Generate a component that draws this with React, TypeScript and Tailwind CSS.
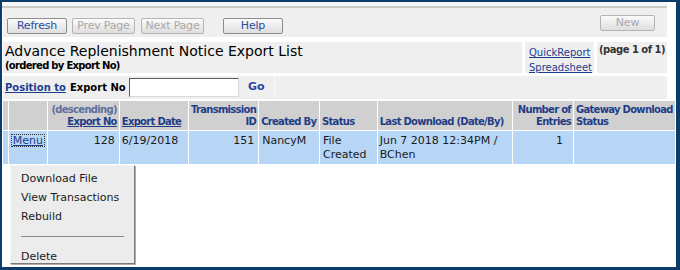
import { useState } from "react";

const font = "font-['DejaVu_Sans',Verdana,sans-serif]";

const columns = [
  { key: "pad", w: "w-[5px]", top: "", bottom: "", right: false, link: false },
  { key: "menu", w: "w-[33px]", top: "", bottom: "", right: false, link: false },
  { key: "exportNo", w: "w-[71px]", top: "(descending)", bottom: "Export No", right: true, link: true },
  { key: "exportDate", w: "w-[69px]", top: "", bottom: "Export Date", right: false, link: true },
  { key: "transId", w: "w-[69px]", top: "Transmission", bottom: "ID", right: true, link: false },
  { key: "createdBy", w: "w-[60px]", top: "", bottom: "Created By", right: false, link: false },
  { key: "status", w: "w-[58px]", top: "", bottom: "Status", right: false, link: false },
  { key: "lastDl", w: "w-[136px]", top: "", bottom: "Last Download (Date/By)", right: false, link: false },
  { key: "entries", w: "w-[60px]", top: "Number of", bottom: "Entries", right: true, link: false },
  { key: "gateway", w: "w-[101px]", top: "Gateway Download", bottom: "Status", right: false, link: false },
];

function ToolButton(props: { label: string; disabled?: boolean; className?: string }) {
  return (
    <button
      type="button"
      className={`h-[16px] rounded-[2px] border bg-gradient-to-b from-[#fbfbfb] to-[#dedede] text-[11px] leading-[14px] tracking-[-0.2px] ${
        props.disabled ? "border-[#b4b4b4] text-[#a8a8a8]" : "border-[#8c8c8c] text-[#2b4a9e]"
      } ${props.className ?? ""}`}
    >
      {props.label}
    </button>
  );
}

export default function App() {
  const [menuOpen] = useState(true);

  return (
    <div className={`${font} w-[680px] h-[270px] bg-[#0c3c6a] pl-[2px] pt-[2px] pr-[4px] pb-[3px]`}>
      <div className="relative h-full w-full bg-white overflow-hidden">
        <div className="h-[4px] w-[665px] bg-[#f6f6f6]" />
        <div className="h-[2px] w-[665px] bg-[#c8c8c8]" />

        {/* toolbar */}
        <div className="ml-[1px] flex h-[29px] w-[664px] items-start bg-[#efefef]">
          <div className="mt-[10px] ml-[4px] flex">
            <ToolButton label="Refresh" className="w-[60px]" />
            <ToolButton label="Prev Page" disabled className="ml-[5px] w-[63px]" />
            <ToolButton label="Next Page" disabled className="ml-[6px] w-[63px]" />
            <ToolButton label="Help" className="ml-[19px] w-[60px]" />
          </div>
          <ToolButton label="New" disabled className="mt-[7px] ml-auto mr-[12px] w-[55px]" />
        </div>

        {/* title row */}
        <div className="mt-[5px] ml-[1px] flex h-[31px] w-[664px] gap-[3px]">
          <div className="flex-1 bg-[#efefef] pl-[2px] pt-[1px]">
            <h1 className="text-[14px] leading-[17px] text-black">Advance Replenishment Notice Export List</h1>
            <p className="text-[10px] leading-[12px] font-bold tracking-[-0.7px] text-black">(ordered by Export No)</p>
          </div>
          <div className="w-[69px] bg-[#efefef] pl-[4px] pt-[3px] text-[10px] leading-[15px] text-[#1b3d8f]">
            <a className="block underline">QuickReport</a>
            <a className="block underline">Spreadsheet</a>
          </div>
          <div className="w-[70px] bg-[#efefef] pl-[2px] pt-[2px] text-[10px] leading-[12px] font-bold tracking-[-0.5px] text-[#333]">
            (page 1 of 1)
          </div>
        </div>

        {/* position row */}
        <div className="mt-[3px] ml-[1px] flex h-[23px] w-[664px] items-center bg-[#efefef] text-[10px] font-bold">
          <a className="ml-[2px] text-[#1b3d8f] underline">Position to</a>
          <span className="ml-[4px] text-black">Export No</span>
          <input
            type="text"
            className="ml-[3px] h-[19px] w-[110px] border border-t-[#5a5a5a] border-l-[#5a5a5a] border-r-[#d8d8d8] border-b-[#d8d8d8] bg-white"
          />
          <div className="flex h-full w-[36px] items-center justify-center border-r border-[#fafafa]">
            <span className="text-[11px] text-[#2b46a0]">Go</span>
          </div>
        </div>

        {/* table */}
        <table className="mt-[1px] table-fixed border-separate border-spacing-[1px] bg-white">
          <colgroup>
            {columns.map((c) => (
              <col key={c.key} className={c.w} />
            ))}
          </colgroup>
          <thead>
            <tr>
              {columns.map((c) => (
                <th
                  key={c.key}
                  className={`h-[29px] whitespace-nowrap bg-[#d0d0d0] px-[2px] pb-[2px] align-bottom text-[10px] leading-[12px] font-bold tracking-[-0.7px] text-[#1f3d87] ${
                    c.right ? "text-right" : "text-left"
                  }`}
                >
                  {c.top && (
                    <div className={c.key === "exportNo" ? "text-[#5d6f9c]" : ""}>{c.top}</div>
                  )}
                  <div className={c.link ? "underline" : ""}>{c.bottom}</div>
                </th>
              ))}
            </tr>
          </thead>
          <tbody className="text-[11px] leading-[14px] text-[#1a1a1a]">
            <tr className="bg-[#b7d6f6]">
              <td className="h-[33px]" />
              <td className="px-[2px] pt-[3px] align-top">
                <a className="inline-block border border-dotted border-[#333] px-[1px] leading-[11px] text-[#1b3d8f] underline">
                  Menu
                </a>
              </td>
              <td className="px-[4px] pt-[3px] align-top text-right">128</td>
              <td className="px-[2px] pt-[3px] align-top">6/19/2018</td>
              <td className="px-[4px] pt-[3px] align-top text-right">151</td>
              <td className="px-[3px] pt-[3px] align-top">NancyM</td>
              <td className="px-[3px] pt-[3px] align-top">
                File
                <br />
                Created
              </td>
              <td className="px-[2px] pt-[3px] align-top">
                Jun 7 2018 12:34PM /
                <br />
                BChen
              </td>
              <td className="px-[10px] pt-[3px] align-top text-right">1</td>
              <td />
            </tr>
          </tbody>
        </table>

        {/* popup menu */}
        {menuOpen && (
          <div className="absolute left-[8px] top-[163px] w-[125px] h-[99px] border border-t-[#f4f4f4] border-l-[#f4f4f4] border-r-[#7a7a7a] border-b-[#7a7a7a] bg-[#ececec] pt-[3px] text-[11px] leading-[19px] text-[#1a1a1a] shadow-[1px_1px_0_#b0b0b0]">
            <div className="pl-[10px]">Download File</div>
            <div className="pl-[10px]">View Transactions</div>
            <div className="pl-[10px]">Rebuild</div>
            <div className="my-[10px] ml-[10px] mr-[10px] h-px bg-[#8a8a8a]" />
            <div className="pl-[10px]">Delete</div>
          </div>
        )}
      </div>
    </div>
  );
}
